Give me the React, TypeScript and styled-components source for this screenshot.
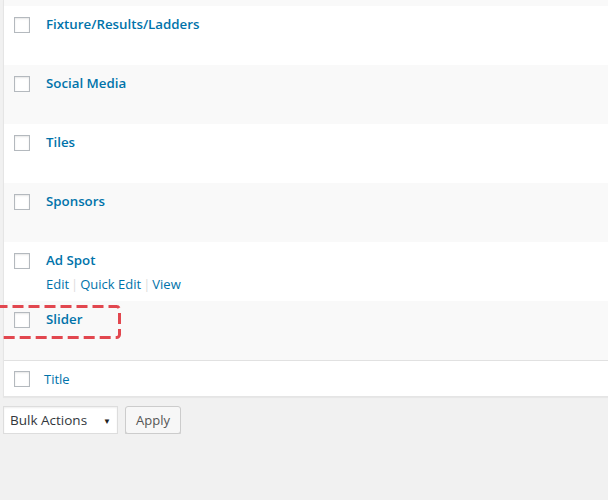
import React from "react";
import styled, { createGlobalStyle } from "styled-components";

const GlobalStyle = createGlobalStyle`
  html, body {
    margin: 0;
    padding: 0;
    background: #f1f1f1;
    font-family: "Open Sans", "Noto Sans", sans-serif;
    font-size: 13px;
    color: #444;
    overflow: hidden;
  }
`;

const posts = [
  { id: 1, title: "Fixture/Results/Ladders" },
  { id: 2, title: "Social Media" },
  { id: 3, title: "Tiles" },
  { id: 4, title: "Sponsors" },
  { id: 5, title: "Ad Spot", actions: true },
  { id: 6, title: "Slider", marked: true },
];

const Page = styled.div`
  padding-left: 3px;
  width: 640px;
`;

const Table = styled.div`
  background: #fff;
  border: 1px solid #e5e5e5;
  border-top: none;
  box-shadow: 0 1px 1px rgba(0, 0, 0, 0.04);
`;

const Stub = styled.div`
  height: 6px;
  background: #f9f9f9;
`;

const Row = styled.div<{ $alt: boolean }>`
  position: relative;
  display: flex;
  align-items: flex-start;
  gap: 16px;
  height: 59px;
  box-sizing: border-box;
  padding: 11px 0 0 10px;
  background: ${(p) => (p.$alt ? "#f9f9f9" : "#fff")};
`;

const Check = styled.span`
  flex: none;
  width: 16px;
  height: 16px;
  box-sizing: border-box;
  border: 1px solid #b4b9be;
  background: #fff;
  box-shadow: inset 0 1px 2px rgba(0, 0, 0, 0.1);
`;

const Cell = styled.div`
  display: flex;
  flex-direction: column;
  gap: 4px;
  margin-top: -3px;
`;

const RowTitle = styled.a`
  font-weight: 600;
  font-size: 13.3px;
  line-height: 20px;
  color: #0073aa;
  text-decoration: none;
`;

const Actions = styled.div`
  display: flex;
  font-size: 13px;
  line-height: 20px;
`;

const ActionLink = styled.a`
  color: #0073aa;
  text-decoration: none;
`;

const Sep = styled.span`
  padding: 0 2px;
  color: #ddd;
`;

const Marker = styled.svg`
  position: absolute;
  left: -12px;
  top: 4px;
  width: 129px;
  height: 35px;
  overflow: visible;
  pointer-events: none;
`;

const Foot = styled.div`
  display: flex;
  align-items: center;
  gap: 14px;
  height: 35px;
  padding-left: 10px;
  border-top: 1px solid #e1e1e1;
`;

const FootLabel = styled.a`
  color: #0073aa;
  font-size: 13px;
  text-decoration: none;
`;

const Nav = styled.div`
  display: flex;
  gap: 7px;
  margin-top: 9px;
`;

const Select = styled.div`
  display: flex;
  align-items: center;
  justify-content: space-between;
  width: 115px;
  height: 28px;
  box-sizing: border-box;
  padding: 0 6px 0 6px;
  background: #fff;
  border: 1px solid #ddd;
  box-shadow: inset 0 1px 2px rgba(0, 0, 0, 0.07);
  color: #32373c;
  font-size: 13.5px;
`;

const Arrow = styled.span`
  font-size: 8px;
  color: #222;
`;

const Button = styled.button`
  height: 28px;
  padding: 0 10px;
  font-family: inherit;
  font-size: 13px;
  color: #555;
  background: #f7f7f7;
  border: 1px solid #ccc;
  border-radius: 3px;
  box-shadow: 0 1px 0 #ccc;
`;

export default function App() {
  return (
    <Page>
      <GlobalStyle />
      <Table>
        <Stub />
        {posts.map((post, i) => (
          <Row key={post.id} $alt={i % 2 === 1}>
            <Check />
            <Cell>
              <RowTitle href="#">{post.title}</RowTitle>
              {post.actions && (
                <Actions>
                  <ActionLink href="#">Edit</ActionLink>
                  <Sep>|</Sep>
                  <ActionLink href="#">Quick Edit</ActionLink>
                  <Sep>|</Sep>
                  <ActionLink href="#">View</ActionLink>
                </Actions>
              )}
            </Cell>
            {post.marked && (
              <Marker viewBox="0 0 129 35">
                <rect
                  x="1.5"
                  y="1.5"
                  width="126"
                  height="31"
                  rx="3"
                  fill="none"
                  stroke="#e2474f"
                  strokeWidth="3"
                  strokeDasharray="11 5"
                />
              </Marker>
            )}
          </Row>
        ))}
        <Foot>
          <Check />
          <FootLabel href="#">Title</FootLabel>
        </Foot>
      </Table>
      <Nav>
        <Select>
          <span>Bulk Actions</span>
          <Arrow>▼</Arrow>
        </Select>
        <Button>Apply</Button>
      </Nav>
    </Page>
  );
}
